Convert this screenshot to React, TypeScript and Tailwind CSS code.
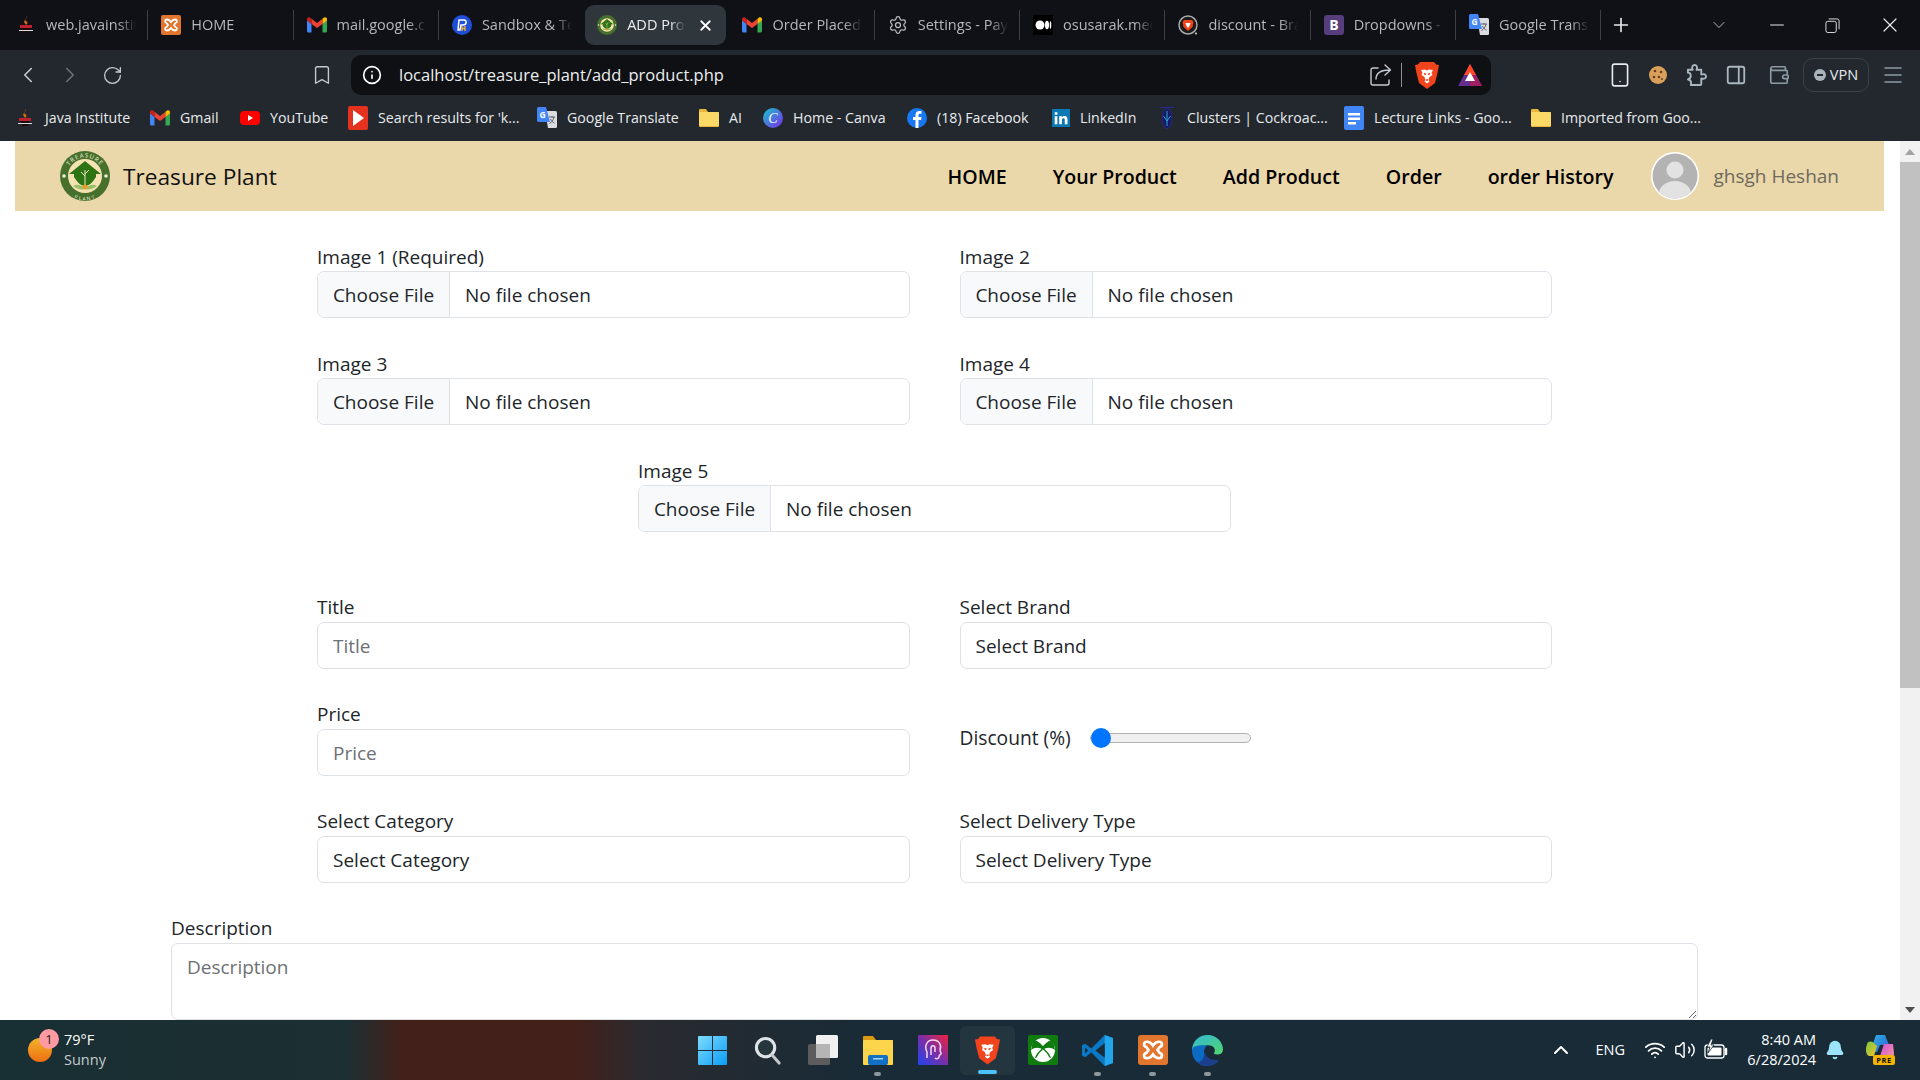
import React from "react";
import { ChevronLeft, ChevronRight, RotateCw, Bookmark, Info, X, Plus, ChevronDown, Minus, Smartphone, Wallet, Menu, PanelRight, ChevronUp, Wifi, Volume2, Bell, Settings } from "lucide-react";

const Java = () => (
  <svg viewBox="0 0 20 20" className="w-5 h-5 shrink-0">
    <path d="M5 12 L15 12 L13 18 L7 18Z" fill="#1b0d0d" />
    <path d="M4 10h12v3H4z" fill="#c01f2e" />
    <path d="M10 1c3 2-3 3 0 5 2 1 2 2 0 4-1-2-3-3-1-5 1-1 2-2 1-4z" fill="#d2691e" />
    <path d="M3 15h14v1H3z" fill="#ddd" />
  </svg>
);
const Xampp = ({ c = "w-5 h-5" }: { c?: string }) => (
  <svg viewBox="0 0 20 20" className={`${c} shrink-0`}>
    <rect width="20" height="20" rx="2" fill="#e2762f" />
    <path d="M6 4.500c2 0 3 1 4 2.500 1-1.500 2-2.500 4-2.500 2.500 0 2.500 3 .5 3.500L13 10l1.500 2c2 .5 2 3.500-.5 3.500-2 0-3-1-4-2.500-1 1.500-2 2.500-4 2.500-2.500 0-2.500-3-.5-3.500L7 10 5.500 8C3.500 7.500 3.500 4.500 6 4.500z" fill="none" stroke="#fff" strokeWidth="1.800" />
  </svg>
);
const Gmail = () => (
  <svg viewBox="0 0 20 16" className="w-5 h-4 shrink-0">
    <path d="M0 3v11a1.500 1.500 0 0 0 1.500 1.500H4.500V7z" fill="#4285f4" />
    <path d="M20 3v11a1.500 1.500 0 0 1-1.500 1.500H15.500V7z" fill="#34a853" />
    <path d="M4.500 7 0 3.500V2C0 .5 1.800-.3 3 .6L4.500 1.800z" fill="#c5221f" />
    <path d="M4.500 1.800 10 6l5.500-4.200V7L10 11 4.500 7z" fill="#ea4335" />
    <path d="M15.500 1.800 17 .6C18.200-.3 20 .5 20 2v1.500L15.500 7z" fill="#fbbc04" />
  </svg>
);
const Paypal = () => (
  <svg viewBox="0 0 20 20" className="w-5 h-5 shrink-0">
    <circle cx="10" cy="10" r="10" fill="#1f4fd8" />
    <path d="M7 5h5c3 0 3 5-1 5H9l-1 5H6z" fill="none" stroke="#fff" strokeWidth="1.500" />
    <path d="M10 11v5M13 11v5M10 13.500h3" stroke="#f5b335" strokeWidth="1.300" />
  </svg>
);
const Logo = ({ size = "w-5 h-5", text = false }: { size?: string; text?: boolean }) => (
  <svg viewBox="0 0 50 50" className={`${size} shrink-0`}>
    <defs>
      <path id={text ? "logoArcT" : "logoArcS"} d="M6.500 25a18.500 18.500 0 0 1 37 0" />
      <path id={text ? "logoArcB" : "logoArcC"} d="M3.500 25a21.500 21.500 0 0 0 43 0" />
    </defs>
    <circle cx="25" cy="25" r="25" fill="#47702c" />
    <circle cx="25" cy="25" r="17" fill="#f6e3b4" />
    <path d="M9 23 25 10l16 13h-5v3c-3 5-7 9-11 9s-8-4-11-9v-3z" fill="#2f7412" />
    <path d="M25 34V19M25 25l-4-4M25 23l4-4" stroke="#e8e3c0" strokeWidth="1" fill="none" />
    <path d="M13 35c5-3 8 0 12 1 4-1 7-4 12-1-4 3-8 4-12 3-4 1-8 0-12-3z" fill="#9cc068" />
    <path d="M22 36l3-3 3 3-3 3z" fill="#f19a2a" />
    <circle cx="4" cy="25" r="1.800" fill="#eef2dd" />
    <circle cx="46" cy="25" r="1.800" fill="#eef2dd" />
    {text && (
      <>
        <text fontSize="6" fill="#eef2dd" fontFamily="'Open Sans',sans-serif" letterSpacing="1">
          <textPath href="#logoArcT" startOffset="50%" textAnchor="middle">TREASURE</textPath>
        </text>
        <text fontSize="5" fill="#eef2dd" fontFamily="'Open Sans',sans-serif" letterSpacing="1" dy="3">
          <textPath href="#logoArcB" startOffset="50%" textAnchor="middle">PLANT</textPath>
        </text>
      </>
    )}
  </svg>
);
const Medium = () => (
  <svg viewBox="0 0 20 20" className="w-5 h-5 shrink-0">
    <rect width="20" height="20" fill="#000" />
    <ellipse cx="7" cy="10" rx="4.500" ry="4.500" fill="#fff" />
    <ellipse cx="14" cy="10" rx="2" ry="4.200" fill="#fff" />
    <ellipse cx="17.500" cy="10" rx=".8" ry="3.800" fill="#fff" />
  </svg>
);
const Brave = ({ c = "w-5 h-5" }: { c?: string }) => (
  <svg viewBox="0 0 24 28" className={`${c} shrink-0`}>
    <path d="M5 1h14l2 2.500 3 .5-1.500 8L20 22l-8 6-8-6L1.500 12 0 4l3-.5z" fill="#f1441d" />
    <path d="M6 9l4-.5 2 1 2-1 4 .5-1.500 3 1 2-3 2-1 3 1 1.500-2.500 2-2.500-2 1-1.500-1-3-3-2 1-2z" fill="#fff" />
    <path d="M9 12.500l2 1M15 12.500l-2 1M11 19h2" stroke="#f1441d" strokeWidth="1.400" />
  </svg>
);
const BraveRing = () => (
  <svg viewBox="0 0 20 20" className="w-5 h-5 shrink-0">
    <circle cx="10" cy="10" r="9" fill="#1a1a1a" stroke="#aaa" strokeWidth="1.500" />
    <path d="M6 5h8l1.500 2-1 5L10 16l-4.500-4-1-5z" fill="#f1441d" />
    <path d="M7.500 8h5l-1 3-1.500 2-1.500-2z" fill="#fff" />
    <circle cx="18" cy="18.500" r="1" fill="#ddd" />
  </svg>
);
const Bootstrap = () => (
  <svg viewBox="0 0 20 20" className="w-5 h-5 shrink-0">
    <rect width="20" height="20" rx="3" fill="#563d7c" />
    <text x="10" y="15" textAnchor="middle" fontSize="14" fontWeight="700" fill="#fff" fontFamily="'Open Sans',sans-serif">B</text>
  </svg>
);
const Translate = () => (
  <svg viewBox="0 0 20 22" className="w-5 h-[22px] shrink-0">
    <path d="M8 4h10.500a1.500 1.500 0 0 1 1.500 1.500v14a1.500 1.500 0 0 1-1.500 1.500H11z" fill="#dadce0" />
    <path d="M1.500 0H9l4 15H1.500A1.500 1.500 0 0 1 0 13.500v-12A1.500 1.500 0 0 1 1.500 0z" fill="#4285f4" />
    <text x="5.500" y="10.500" textAnchor="middle" fontSize="8.500" fontWeight="700" fill="#fff" fontFamily="'Open Sans',sans-serif">G</text>
    <path d="M12 10h6M15 9v1.500M17 10c-.5 3-2.500 5.500-4.500 6.500M13.500 12c.8 2 2.500 3.500 4 4" stroke="#5f6368" strokeWidth="1" fill="none" />
  </svg>
);
const YouTube = () => (
  <svg viewBox="0 0 20 14" className="w-5 h-[14px] shrink-0">
    <rect width="20" height="14" rx="4" fill="#f00" />
    <path d="M8 4l5 3-5 3z" fill="#fff" />
  </svg>
);
const PlayRed = () => (
  <svg viewBox="0 0 20 24" className="w-5 h-6 shrink-0">
    <rect width="20" height="24" rx="2" fill="#e5321f" />
    <path d="M5 4l11 8-11 8z" fill="#fff" />
  </svg>
);
const Folder = ({ c = "w-5 h-[18px]" }: { c?: string }) => (
  <svg viewBox="0 0 20 18" className={`${c} shrink-0`}>
    <path d="M1 0h6l2 3h10a1 1 0 0 1 1 1v13a1 1 0 0 1-1 1H1a1 1 0 0 1-1-1V1a1 1 0 0 1 1-1z" fill="#e8b83c" />
    <rect y="3" width="20" height="14" rx="1" fill="#fbd966" />
  </svg>
);
const Canva = () => (
  <svg viewBox="0 0 20 20" className="w-5 h-5 shrink-0">
    <defs>
      <linearGradient id="cv" x1="0" y1="0" x2="1" y2="1">
        <stop offset="0" stopColor="#17c7cf" />
        <stop offset="1" stopColor="#7c2ae8" />
      </linearGradient>
    </defs>
    <circle cx="10" cy="10" r="10" fill="url(#cv)" />
    <text x="10" y="15" textAnchor="middle" fontSize="14" fontStyle="italic" fill="#fff" fontFamily="'Liberation Serif',serif">C</text>
  </svg>
);
const Facebook = () => (
  <svg viewBox="0 0 20 20" className="w-5 h-5 shrink-0">
    <circle cx="10" cy="10" r="10" fill="#1877f2" />
    <path d="M11.500 20v-8h2.500l.5-3h-3V7.200c0-1 .4-1.500 1.600-1.500H14.500V3.100C14 3 13 3 12.300 3 10 3 8.500 4.300 8.500 6.900V9H6v3h2.500v8z" fill="#fff" />
  </svg>
);
const LinkedIn = () => (
  <svg viewBox="0 0 20 20" className="w-[18px] h-[18px] shrink-0 ml-px">
    <rect width="20" height="20" fill="#0a78b5" />
    <path d="M3 8h3v9H3zM3 3.500h3v3H3zM8 8h3v1.300C11.600 8.400 12.700 7.800 14 7.800c2.300 0 3.200 1.500 3.200 3.900V17h-3v-4.800c0-1.200-.4-1.900-1.400-1.900S11 11 11 12.200V17H8z" fill="#fff" />
  </svg>
);
const Roach = () => (
  <svg viewBox="0 0 20 24" className="w-5 h-6 shrink-0">
    <path d="M3 1.500h14" stroke="#2b2a8a" strokeWidth="1" />
    <ellipse cx="10" cy="12.500" rx="5" ry="10" fill="#161a5e" stroke="#2b2a8a" strokeWidth="1" />
    <path d="M10 5v15M6.500 10l3.500 5 3.500-5" stroke="#29a5d8" strokeWidth="1" fill="none" />
  </svg>
);
const Docs = () => (
  <svg viewBox="0 0 20 24" className="w-5 h-6 shrink-0">
    <rect width="20" height="24" rx="2" fill="#4285f4" />
    <path d="M4 7h12v2.500H4zM4 11.500h12V14H4zM4 16h8v2.500H4z" fill="#fff" />
  </svg>
);
const Cookie = () => (
  <svg viewBox="0 0 20 20" className="w-5 h-5">
    <circle cx="10" cy="10" r="9" fill="#d9a05b" />
    <circle cx="7" cy="6" r="1.300" fill="#6b3d1e" />
    <circle cx="13" cy="7" r="1.300" fill="#6b3d1e" />
    <circle cx="6" cy="12" r="1.300" fill="#6b3d1e" />
    <circle cx="11" cy="12" r="1.300" fill="#6b3d1e" />
    <circle cx="14" cy="14" r="1" fill="#6b3d1e" />
  </svg>
);
const Bat = () => (
  <svg viewBox="0 0 24 22" className="w-6 h-[22px] shrink-0">
    <path d="M12 0 24 22H0z" fill="#662d91" />
    <path d="M12 0 24 22H12z" fill="#9e1f63" />
    <path d="M12 0 18 11H6z" fill="#ff4724" />
    <path d="M12 8 17 17H7z" fill="#fff" />
  </svg>
);
const ShareIcon = () => (
  <svg viewBox="0 0 22 22" className="h-[22px] w-[22px] text-[#c3cacf]" fill="none" stroke="currentColor" strokeWidth="1.400" strokeLinecap="round" strokeLinejoin="round">
    <path d="M8 4H3a2 2 0 0 0-2 2v13a2 2 0 0 0 2 2h14a2 2 0 0 0 2-2v-3" />
    <path d="M6 15c0-6 4-9 14-9M15 1l5.500 5L15 11" />
  </svg>
);
const PuzzleIcon = () => (
  <svg viewBox="0 0 22 24" className="h-[23px] w-[21px] text-[#aab6bf]" fill="none" stroke="currentColor" strokeWidth="2" strokeLinejoin="round">
    <path d="M2 6h5c-1.500-3 0-5 2-5s3.500 2 2 5h5v5c3-1 5 0 5 2s-2 3-5 2v6a1 1 0 0 1-1 1H5c1-3 0-5-2-5.500L2 16c2-.5 3-1.500 3-3.500S4 9 2 9z" />
  </svg>
);
const BatteryIcon = () => (
  <svg viewBox="0 0 24 22" className="h-[22px] w-[24px] text-white" fill="none" stroke="currentColor" strokeWidth="1.300">
    <rect x="1" y="6" width="19" height="13" rx="2.500" />
    <path d="M22 10v5" strokeWidth="2.500" strokeLinecap="round" />
    <rect x="3.500" y="8.500" width="14" height="8" rx="1" fill="currentColor" stroke="none" />
    <path d="M7 0 3 8h3l-2 6 6-8H7l2-6z" fill="currentColor" stroke="#182b36" strokeWidth=".8" />
  </svg>
);

type Tab = { t: string; i: React.ReactNode; active?: boolean };
const tabs: Tab[] = [
  { t: "web.javainstit", i: <Java /> },
  { t: "HOME", i: <Xampp /> },
  { t: "mail.google.c", i: <Gmail /> },
  { t: "Sandbox & Te", i: <Paypal /> },
  { t: "ADD Pro", i: <Logo />, active: true },
  { t: "Order Placed", i: <Gmail /> },
  { t: "Settings - Pay", i: <Settings className="w-5 h-5 shrink-0 text-[#b9bec2]" strokeWidth={1.5} /> },
  { t: "osusarak.med", i: <Medium /> },
  { t: "discount - Bra", i: <BraveRing /> },
  { t: "Dropdowns -", i: <Bootstrap /> },
  { t: "Google Transl", i: <Translate /> },
];

const bookmarks = [
  { t: "Java Institute", i: <Java />, w: "w-[135px]" },
  { t: "Gmail", i: <Gmail />, w: "w-[90px]" },
  { t: "YouTube", i: <YouTube />, w: "w-[108px]" },
  { t: "Search results for 'k...", i: <PlayRed />, w: "w-[189px]" },
  { t: "Google Translate", i: <Translate />, w: "w-[162px]" },
  { t: "AI", i: <Folder />, w: "w-[64px]" },
  { t: "Home - Canva", i: <Canva />, w: "w-[144px]" },
  { t: "(18) Facebook", i: <Facebook />, w: "w-[144px]" },
  { t: "LinkedIn", i: <LinkedIn />, w: "w-[106px]" },
  { t: "Clusters | Cockroac...", i: <Roach />, w: "w-[187px]" },
  { t: "Lecture Links - Goo...", i: <Docs />, w: "w-[187px]" },
  { t: "Imported from Goo...", i: <Folder />, w: "w-[180px]" },
];

const ctl = "h-[47px] w-full rounded-[7px] border border-[#dee2e6] bg-white px-[15px] pt-[1px] text-[19px] text-[#212529] outline-none placeholder:text-[#6d7175] appearance-none";
const lbl = "block h-[30px] text-[19px] leading-[30px] text-[#212529]";
const lblLow = "block h-[30px] text-[19px] leading-[31px] text-[#212529]";

const FileField = ({ label }: { label: string }) => (
  <div>
    <label className={lbl}>{label}</label>
    <div className="-mt-px flex h-[47px] overflow-hidden rounded-[7px] border border-[#dee2e6] bg-white text-[19px] text-[#212529]">
      <button className="h-full w-[132px] shrink-0 border-r border-[#dee2e6] bg-[#f8f9fa] pt-[2px] text-center">Choose File</button>
      <span className="self-center pl-[15px] pt-[2px]">No file chosen</span>
    </div>
  </div>
);
const TextField = ({ label }: { label: string }) => (
  <div>
    <label className={lblLow}>{label}</label>
    <input className={ctl} placeholder={label} />
  </div>
);
const SelectField = ({ label }: { label: string }) => (
  <div>
    <label className={lblLow}>{label}</label>
    <select className={ctl}>
      <option>{label}</option>
    </select>
  </div>
);

const Windows = () => (
  <svg viewBox="0 0 29 29" className="w-[29px] h-[29px]">
    <defs>
      <linearGradient id="win" x1="0" y1="0" x2="1" y2="1">
        <stop offset="0" stopColor="#7fdcff" />
        <stop offset="1" stopColor="#0a9cf5" />
      </linearGradient>
    </defs>
    <path d="M1 0h13v14H0V1a1 1 0 0 1 1-1zM15 0h13a1 1 0 0 1 1 1v13H15zM0 15h14v14H1a1 1 0 0 1-1-1zM15 15h14v13a1 1 0 0 1-1 1H15z" fill="url(#win)" />
  </svg>
);
const Search = () => (
  <svg viewBox="0 0 28 30" className="w-[27px] h-[29px]">
    <circle cx="12" cy="12" r="9.500" fill="#26363d" stroke="#dfe3e5" strokeWidth="3.200" />
    <path d="M19 20l7 8" stroke="#c4c8ca" strokeWidth="3.200" strokeLinecap="round" />
  </svg>
);
const TaskView = () => (
  <svg viewBox="0 0 30 30" className="w-[30px] h-[30px]">
    <rect y="9" width="22" height="21" rx="1.500" fill="#5c5c5c" />
    <rect x="8" y="0" width="22" height="23" rx="1.500" fill="#f0f0f0" />
    <rect x="8" y="9" width="14" height="14" fill="#b5b5b5" />
  </svg>
);
const Explorer = () => (
  <svg viewBox="0 0 30 30" className="w-[30px] h-[30px]">
    <path d="M0 2a1 1 0 0 1 1-1h9l3 4h17v4H0z" fill="#d99a10" />
    <rect y="5" width="30" height="25" rx="1" fill="#fcd54c" />
    <rect x="5" y="20" width="20" height="10" rx="2" fill="#1170c4" />
    <rect x="10" y="23" width="10" height="1.500" fill="#a8d6fa" />
  </svg>
);
const Clipchamp = () => (
  <svg viewBox="0 0 30 30" className="w-[30px] h-[30px]">
    <defs>
      <linearGradient id="cl" x1="0" y1="1" x2="1" y2="0">
        <stop offset="0" stopColor="#1e45ef" />
        <stop offset=".5" stopColor="#7a2fa8" />
        <stop offset="1" stopColor="#f0213c" />
      </linearGradient>
    </defs>
    <rect width="30" height="30" fill="url(#cl)" />
    <path d="M9 23v-6c-3-6 0-12 6-12s9 5 7 10c-.5 1 2 3 1 4s-2 1-2 3-3 2-4 1M13 20v-7c0-3 4-3 4 0v4" fill="none" stroke="#f4d8ee" strokeWidth="1.500" />
  </svg>
);
const Xbox = () => (
  <svg viewBox="0 0 30 30" className="w-[30px] h-[30px]">
    <rect width="30" height="30" rx="2" fill="#107c10" />
    <circle cx="15" cy="15" r="12" fill="#fff" />
    <path d="M5 5c4 0 7 3 10 6 3-3 6-6 10-6l2 10c-4-3-9-3-12 0-3-3-8-3-12 0z" fill="#107c10" />
    <path d="M15 13c3 2 7 6 8 10l-8-3-8 3c1-4 5-8 8-10z" fill="#107c10" />
    <path d="M15 14.500c2.500 2 5 5 6 7.500-2 2-4 3-6 3s-4-1-6-3c1-2.500 3.500-5.500 6-7.500z" fill="#fff" />
  </svg>
);
const VSCode = () => (
  <svg viewBox="0 0 30 30" className="w-[31px] h-[31px]">
    <path d="M22 0 9 13 3 8.500 0 10v10l3 1.500L9 17l13 13 8-3V3z" fill="#0a78c4" />
    <path d="M22 0l8 3v24l-8 3z" fill="#23a5ec" />
    <path d="M22 8v14l-9-7z" fill="#182b36" />
    <path d="M3 12v6l3-3z" fill="#182b36" />
  </svg>
);
const Edge = () => (
  <svg viewBox="0 0 30 30" className="w-[31px] h-[31px]">
    <defs>
      <linearGradient id="ed1" x1="0" y1="0" x2="1" y2="1">
        <stop offset="0" stopColor="#36b8d8" />
        <stop offset="1" stopColor="#4ed66b" />
      </linearGradient>
    </defs>
    <path d="M0 15C0 6 7 0 15 0c9 0 15 7 15 14 0 5-6 6-9 4 2-2 2-8-6-8-5 0-8 4-8 8z" fill="url(#ed1)" />
    <path d="M0 15c0 9 7 15 14 15 5 0 9-2 12-5-6 3-13 0-14-6-1-4 0-7 3-9-8 0-15 0-15 5z" fill="#0b6ac2" />
    <path d="M13 13c-2 7 4 12 13 11-3 4-7 6-12 6-4 0-7-1-9-4 4 1 7-3 8-13z" fill="#1b3f8c" />
  </svg>
);
const Copilot = () => (
  <svg viewBox="0 0 30 30" className="w-[30px] h-[30px]">
    <defs>
      <linearGradient id="co1" x1="0" y1="0" x2="1" y2="1">
        <stop offset="0" stopColor="#2bb6e0" />
        <stop offset="1" stopColor="#2f5fdc" />
      </linearGradient>
      <linearGradient id="co2" x1="0" y1="0" x2="1" y2="1">
        <stop offset="0" stopColor="#d24dd8" />
        <stop offset="1" stopColor="#f59aa0" />
      </linearGradient>
      <linearGradient id="co3" x1="0" y1="0" x2="1" y2="1">
        <stop offset="0" stopColor="#76c83e" />
        <stop offset="1" stopColor="#f2c12f" />
      </linearGradient>
    </defs>
    <path d="M11 0h9l4 10h-9l-3 7H5z" fill="url(#co1)" />
    <path d="M19 9h9l1 9c0 3-2 6-7 6h-8z" fill="url(#co2)" />
    <path d="M2 9c1-3 4-3 7-1l3 3-3 10H4C1 20 0 15 2 9z" fill="url(#co3)" />
    <rect x="8" y="20" width="22" height="10" rx="2" fill="#f4b400" />
    <text x="19" y="28" textAnchor="middle" fontSize="7.500" fontWeight="700" fill="#111" fontFamily="'Open Sans',sans-serif" letterSpacing=".6">PRE</text>
  </svg>
);

const taskIcons: { i: React.ReactNode; dot?: boolean; active?: boolean }[] = [
  { i: <Windows /> },
  { i: <Search /> },
  { i: <TaskView /> },
  { i: <Explorer />, dot: true },
  { i: <Clipchamp /> },
  { i: <Brave c="w-[25px] h-[30px]" />, active: true },
  { i: <Xbox /> },
  { i: <VSCode />, dot: true },
  { i: <Xampp c="w-[30px] h-[30px]" />, dot: true },
  { i: <Edge />, dot: true },
];

export default function App() {
  return (
    <div className="flex h-screen w-screen flex-col overflow-hidden bg-white font-['Open_Sans',sans-serif]">
      {/* Tab strip */}
      <div className="flex h-[50px] shrink-0 items-center bg-[#0f1116] pl-[3px] text-[14.500px] text-[#b4b8bc]">
        {tabs.map((tab, i) => (
          <div key={i} className="relative flex h-[40px] w-[145.300px] shrink-0 items-center">
            {tab.active ? (
              <div className="ml-[1px] flex h-full w-[141px] items-center rounded-[9px] bg-[#30373c] pl-[12px] text-[#eceeef]">
                {tab.i}
                <span className="ml-[10px] w-[58px] whitespace-nowrap [mask-image:linear-gradient(90deg,#000_75%,transparent)]">{tab.t}</span>
                <X className="ml-[12px] h-[17px] w-[17px] text-white" strokeWidth={2.500} />
              </div>
            ) : (
              <div className="flex h-full w-full items-center pl-[13px]">
                {tab.i}
                <span className="ml-[10px] w-[90px] whitespace-nowrap [mask-image:linear-gradient(90deg,#000_80%,transparent)]">{tab.t}</span>
              </div>
            )}
            {!tab.active && i !== 3 && <div className="absolute right-0 top-[5px] h-[30px] w-px bg-[#3a3f44]" />}
          </div>
        ))}
        <Plus className="ml-[9px] h-[22px] w-[22px] text-[#e6e8ea]" strokeWidth={1.800} />
        <ChevronDown className="ml-[77px] h-[20px] w-[20px] text-[#b4b8bc]" strokeWidth={1.200} />
        <Minus className="ml-[37px] h-[22px] w-[22px] text-[#e6e8ea]" strokeWidth={1.200} />
        <svg viewBox="0 0 16 16" className="ml-[37px] h-[15px] w-[15px] text-[#e6e8ea]" fill="none" stroke="currentColor">
          <rect x="1" y="3.500" width="11" height="12" rx="2" />
          <path d="M4 1h9a2 2 0 0 1 2 2v9" />
        </svg>
        <X className="ml-[38px] h-[24px] w-[24px] text-[#e6e8ea]" strokeWidth={1.200} />
      </div>

      {/* Toolbar */}
      <div className="flex h-[50px] shrink-0 items-center bg-[#22282d] pl-[7px] text-[#c3cacf]">
        <div className="flex w-[42px] justify-center"><ChevronLeft className="h-[26px] w-[26px]" strokeWidth={1.500} /></div>
        <div className="flex w-[42px] justify-center"><ChevronRight className="h-[26px] w-[26px] text-[#6a7176]" strokeWidth={1.500} /></div>
        <div className="flex w-[42px] justify-center"><RotateCw className="h-[21px] w-[21px]" strokeWidth={1.500} /></div>
        <div className="ml-[168px] flex w-[42px] justify-center"><Bookmark className="h-[22px] w-[22px]" strokeWidth={1.500} /></div>
        <div className="ml-[8px] flex h-[40px] w-[1140px] items-center rounded-[10px] bg-[#0e1014] pl-[11px] pr-[9px]">
          <Info className="h-[20px] w-[20px] text-white" strokeWidth={2} />
          <span className="ml-[17px] text-[16.500px] text-[#eceeef]">localhost/treasure_plant/add_product.php</span>
          <div className="ml-auto flex items-center">
            <ShareIcon />
            <div className="ml-[9px] h-[24px] w-px bg-[#8a9095]" />
            <div className="ml-[13px]"><Brave c="w-[24px] h-[28px]" /></div>
            <div className="ml-[19px]"><Bat /></div>
          </div>
        </div>
        <div className="ml-[110px] flex w-[38px] justify-center"><Smartphone className="h-[26px] w-[26px] text-[#e8eaed]" strokeWidth={1.500} /></div>
        <div className="flex w-[38px] justify-center"><Cookie /></div>
        <div className="flex w-[38px] justify-center"><PuzzleIcon /></div>
        <div className="ml-[2px] flex w-[38px] justify-center"><PanelRight className="h-[22px] w-[22px] text-[#aab6bf]" strokeWidth={2} /></div>
        <div className="ml-[5px] flex w-[38px] justify-center"><Wallet className="h-[22px] w-[22px] text-[#8c9aa4]" strokeWidth={1.800} /></div>
        <div className="ml-[5px] flex h-[34px] w-[66px] items-center justify-center gap-[4px] rounded-[10px] border border-[#3a4248] text-[14.500px] text-[#e8eaed]">
          <span className="flex h-[12px] w-[12px] items-center justify-center rounded-full bg-[#a9b3ba]"><span className="h-[2px] w-[6px] bg-[#22282d]" /></span>
          VPN
        </div>
        <div className="ml-[5px] flex w-[38px] justify-center"><Menu className="h-[24px] w-[24px] text-[#8c9aa4]" strokeWidth={1.500} /></div>
      </div>

      {/* Bookmarks */}
      <div className="flex h-[41px] shrink-0 items-center bg-[#22282d] pb-[5px] pl-[15px] text-[14.200px] text-[#e8eaed]">
        {bookmarks.map((b, i) => (
          <div key={i} className={`flex shrink-0 items-center ${b.w}`}>
            {b.i}
            <span className="ml-[10px] whitespace-nowrap">{b.t}</span>
          </div>
        ))}
      </div>

      {/* Page + scrollbar */}
      <div className="flex min-h-0 flex-1">
        <div className="min-w-0 flex-1 overflow-hidden">
          <nav className="ml-[15px] mr-[16px] flex h-[70px] items-center bg-[#ead7aa] pl-[45px] pr-[45px]">
            <Logo size="w-[50px] h-[50px]" text />
            <span className="ml-[13px] pt-[2px] text-[22.700px] text-[#111]">Treasure Plant</span>
            <div className="ml-auto flex items-center gap-[46px] pt-[1px] text-[19.600px] font-semibold text-black">
              <span>HOME</span>
              <span>Your Product</span>
              <span>Add Product</span>
              <span>Order</span>
              <span>order History</span>
            </div>
            <svg viewBox="0 0 50 50" className="ml-[37px] h-[50px] w-[50px]">
              <defs><clipPath id="av"><circle cx="25" cy="25" r="22.500" /></clipPath></defs>
              <circle cx="25" cy="25" r="24" fill="#fff" />
              <g clipPath="url(#av)">
                <rect width="50" height="50" fill="#b3b3b3" />
                <circle cx="25" cy="19" r="8.500" fill="#e2e2e2" />
                <ellipse cx="25" cy="43" rx="16" ry="13" fill="#e2e2e2" />
              </g>
            </svg>
            <span className="ml-[13px] text-[19px] text-[#6f6a5d]">ghsgh Heshan</span>
          </nav>

          <div className="ml-[171px] w-[1527px] pt-[31px]">
            <div className="ml-[146px] w-[1235px]">
              <div className="grid grid-cols-2 gap-x-[50px] gap-y-[31px]">
                <FileField label="Image 1 (Required)" />
                <FileField label="Image 2" />
                <FileField label="Image 3" />
                <FileField label="Image 4" />
                <div className="col-span-2 flex justify-center">
                  <div className="w-[593px]"><FileField label="Image 5" /></div>
                </div>
              </div>
              <div className="mt-[60px] grid grid-cols-2 gap-x-[50px] gap-y-[30px]">
                <TextField label="Title" />
                <SelectField label="Select Brand" />
                <TextField label="Price" />
                <div className="flex h-[77px] items-start pt-[24px]">
                  <span className="text-[19.200px] leading-[30px] text-[#212529]">Discount (%)</span>
                  <div className="relative ml-[19px] mt-[10px] h-[10px] w-[161px] rounded-full border border-[#b2b2b2] bg-[#efefef]">
                    <span className="absolute left-0 top-[-6px] h-[20px] w-[20px] rounded-full bg-[#0075ff]" />
                  </div>
                </div>
                <SelectField label="Select Category" />
                <SelectField label="Select Delivery Type" />
              </div>
            </div>
            <div className="mt-[30px]">
              <label className={lbl}>Description</label>
              <textarea
                className="block h-[77px] w-full rounded-[7px] border border-[#dee2e6] bg-white px-[15px] py-[9px] text-[19px] text-[#212529] outline-none placeholder:text-[#6d7175]"
                placeholder="Description"
              />
            </div>
          </div>
        </div>

        {/* Scrollbar */}
        <div className="flex w-[20px] shrink-0 flex-col bg-[#f1f1f1]">
          <div className="flex h-[21px] items-center justify-center">
            <svg viewBox="0 0 10 6" className="h-[6px] w-[10px]"><path d="M5 0l5 6H0z" fill="#a3a3a3" /></svg>
          </div>
          <div className="h-[526px] bg-[#c1c1c1]" />
          <div className="mt-auto flex h-[21px] items-center justify-center">
            <svg viewBox="0 0 10 6" className="h-[6px] w-[10px]"><path d="M5 6l5-6H0z" fill="#505050" /></svg>
          </div>
        </div>
      </div>

      {/* Taskbar */}
      <div className="grid h-[60px] shrink-0 grid-cols-[1fr_auto_1fr] items-center bg-[linear-gradient(90deg,#182f33_0%,#1c2f32_18%,#43201a_21%,#43201a_30%,#2a2a30_33.500%,#182b36_45%,#182b36_100%)]">
        <div className="flex items-center pl-[28px] text-[14.500px] leading-[20px]">
          <div className="relative h-[24px] w-[24px] rounded-full bg-gradient-to-b from-[#f0b429] to-[#ee6c10]">
            <span className="absolute left-[11px] top-[-9px] flex h-[20px] w-[20px] items-center justify-center rounded-full bg-[#ff9aa2] text-[13px] text-[#222]">1</span>
          </div>
          <div className="ml-[12px]">
            <div className="text-white">79°F</div>
            <div className="text-[#c3cbcf]">Sunny</div>
          </div>
        </div>

        <div className="flex items-center">
          {taskIcons.map((t, i) => (
            <div key={i} className={`relative flex h-[49px] w-[55px] items-center justify-center ${t.active ? "rounded-[6px] bg-[#233640]" : ""}`}>
              {t.i}
              {t.dot && <span className="absolute bottom-[-1px] left-[24px] h-[4px] w-[7px] rounded-full bg-[#8e979c]" />}
              {t.active && <span className="absolute bottom-[1px] left-[18px] h-[4px] w-[19px] rounded-full bg-[#4cc2ff]" />}
            </div>
          ))}
        </div>

        <div className="flex items-center justify-end pr-[25px] text-[14.500px] text-white">
          <ChevronUp className="h-[24px] w-[24px]" strokeWidth={2} />
          <span className="ml-[22px]">ENG</span>
          <Wifi className="ml-[19px] h-[22px] w-[22px]" strokeWidth={2} />
          <Volume2 className="ml-[8px] h-[22px] w-[22px]" strokeWidth={1.600} />
          <div className="ml-[8px]"><BatteryIcon /></div>
          <div className="ml-[8px] w-[80px] text-right leading-[20px]">
            <div>8:40 AM</div>
            <div>6/28/2024</div>
          </div>
          <Bell className="ml-[9px] h-[20px] w-[20px] fill-[#9be4fb] text-[#9be4fb]" />
          <div className="ml-[20px]"><Copilot /></div>
        </div>
      </div>
    </div>
  );
}
